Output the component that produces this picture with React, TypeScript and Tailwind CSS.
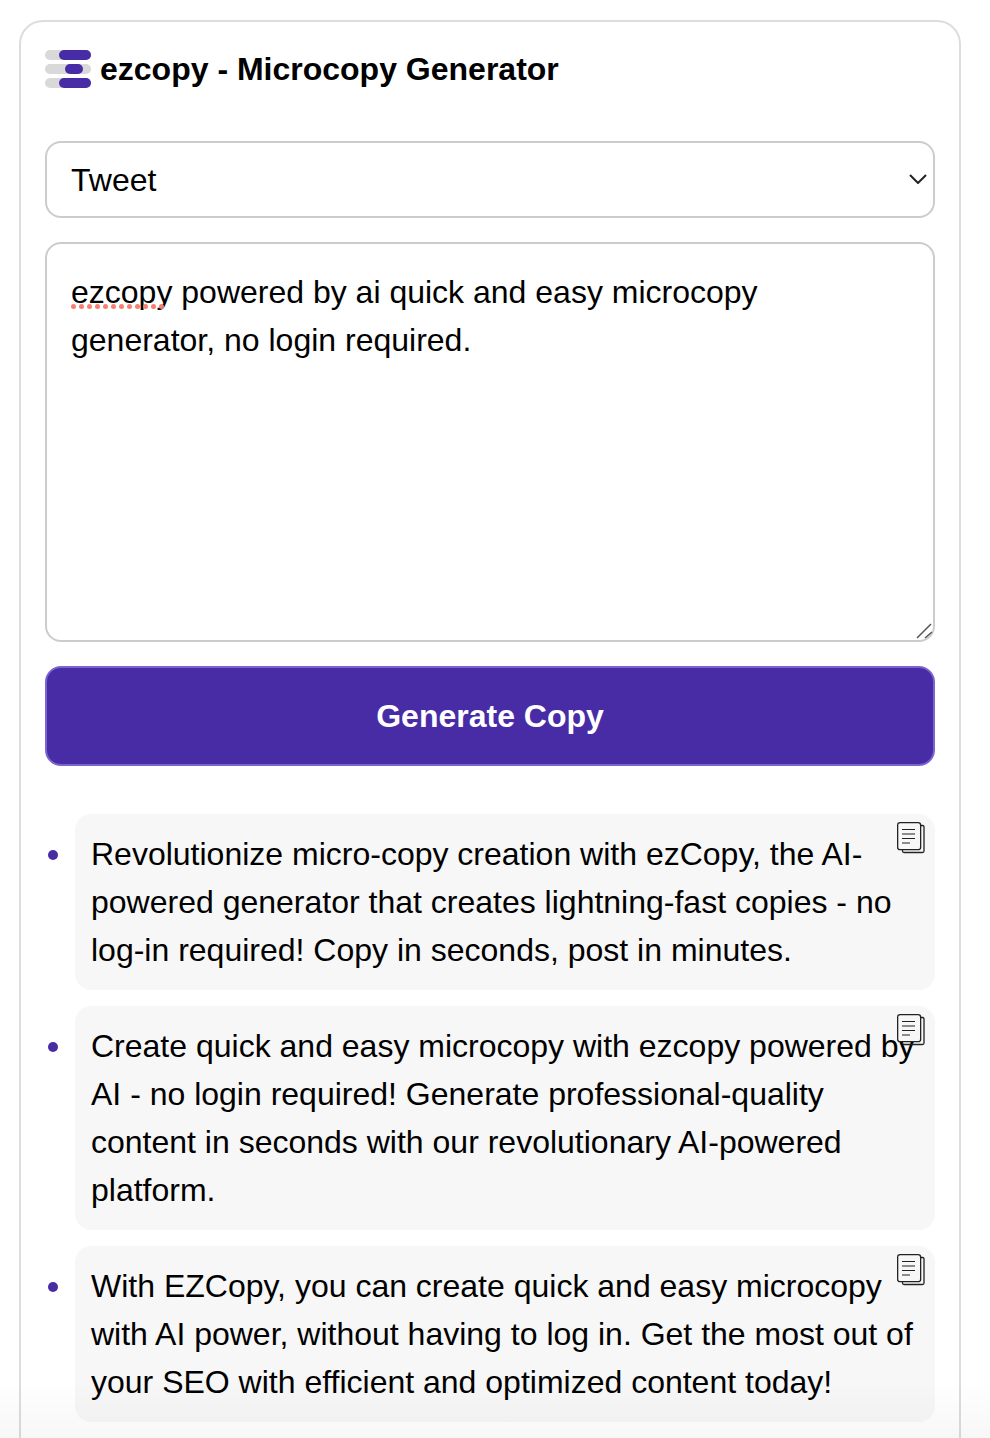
const results = [
  "Revolutionize micro-copy creation with ezCopy, the AI-powered generator that creates lightning-fast copies - no log-in required! Copy in seconds, post in minutes.",
  "Create quick and easy microcopy with ezcopy powered by AI - no login required! Generate professional-quality content in seconds with our revolutionary AI-powered platform.",
  "With EZCopy, you can create quick and easy microcopy with AI power, without having to log in. Get the most out of your SEO with efficient and optimized content today!",
];

const Logo = () => (
  <svg width="46" height="38" viewBox="0 0 46 38" className="shrink-0">
    <rect x="0" y="0" width="46" height="10" rx="5" fill="#d9d9d9" />
    <rect x="0" y="14" width="46" height="10" rx="5" fill="#d9d9d9" />
    <rect x="0" y="28" width="46" height="10" rx="5" fill="#d9d9d9" />
    <rect x="14" y="0" width="32" height="10" rx="5" fill="#472ca6" />
    <rect x="20" y="14" width="18" height="10" rx="5" fill="#472ca6" />
    <rect x="14" y="28" width="32" height="10" rx="5" fill="#472ca6" />
  </svg>
);

const CopyIcon = () => (
  <svg width="28" height="32" viewBox="0 0 28 32" fill="none" stroke="#222" className="absolute right-[10px] top-[8px]">
    <path d="M24 3.500h1.500a1.500 1.500 0 0 1 1.500 1.500v24a1.500 1.500 0 0 1-1.500 1.500H7a1.500 1.500 0 0 1-1.500-1.500v-1" strokeWidth="1.300" />
    <rect x="0.650" y="0.650" width="23" height="27" rx="2.500" fill="#f7f7f7" strokeWidth="1.300" />
    <path d="M5 7.500h13M5 12h13M5 16.500h13M5 21h8" strokeWidth="1.200" />
  </svg>
);

export default function App() {
  return (
    <div className="relative h-[1438px] overflow-hidden bg-white font-['Liberation_Sans',Arial,sans-serif] text-black">
      <div className="ml-[19px] mt-5 w-[942px] rounded-[24px] border-2 border-[#dddddd] px-6 pb-10 pt-[28px]">
        <h1 className="flex h-[38px] items-center gap-[9px] text-[32px] font-bold">
          <Logo />
          <span>ezcopy - Microcopy Generator</span>
        </h1>

        <div className="relative mt-[53px]">
          <select className="h-[77px] w-full appearance-none rounded-2xl border-2 border-[#cccccc] bg-white px-6 text-[32px] outline-none">
            <option>Tweet</option>
          </select>
          <svg width="18" height="10" viewBox="0 0 18 10" fill="none" stroke="#222" strokeWidth="2" className="absolute right-[8px] top-[33px]">
            <path d="M1 1l8 8 8-8" />
          </svg>
        </div>

        <div className="relative mt-6">
          <textarea
            readOnly
            spellCheck={false}
            defaultValue="ezcopy powered by ai quick and easy microcopy generator, no login required."
            className="block h-[400px] w-full resize-none rounded-2xl border-2 border-[#cccccc] p-6 text-[32px] leading-[48px] outline-none"
          />
          <svg width="96" height="5" viewBox="0 0 96 5" className="absolute left-[26px] top-[62px]">
            {Array.from({ length: 12 }, (_, i) => (
              <circle key={i} cx={2.5 + i * 8} cy="2.500" r="2.500" fill="#f77e70" />
            ))}
          </svg>
          <svg width="18" height="20" viewBox="0 0 18 20" fill="none" stroke="#555" className="absolute bottom-0 right-[1px]">
            <path d="M1 16L15 2M9 16l7-6" strokeWidth="1.500" />
          </svg>
        </div>

        <button className="mt-6 block h-[100px] w-full rounded-2xl border-2 border-[#7a64cf] bg-[#472ca6] text-[32px] font-bold text-white">
          Generate Copy
        </button>

        <ul className="mt-12 flex flex-col gap-4">
          {results.map((text) => (
            <li key={text} className="flex items-start">
              <span className="ml-[3px] mt-[36px] h-[10px] w-[10px] shrink-0 rounded-full bg-[#472ca6]" />
              <div className="relative ml-[17px] flex-1 rounded-2xl bg-[#f7f7f7] p-4 text-[32px] leading-[48px]">
                {text}
                <CopyIcon />
              </div>
            </li>
          ))}
        </ul>
      </div>
      <div className="absolute inset-x-0 bottom-0 h-[60px] bg-gradient-to-b from-transparent to-[#00000008]" />
    </div>
  );
}
